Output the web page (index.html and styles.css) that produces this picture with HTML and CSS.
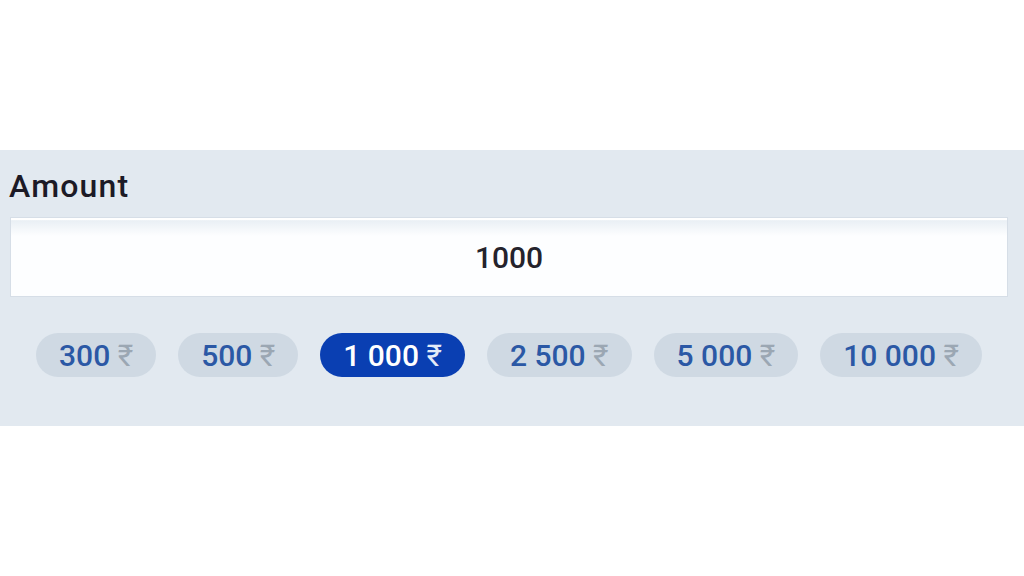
FILE: index.html
```html
<!DOCTYPE html>
<html>
  <head>
    <meta charset="utf-8">
    <title>Amount</title>
    <link rel="stylesheet" href="styles.css">
  </head>
  <body>
    <div class="panel">
      <label class="label" for="amount">Amount</label>
      <input class="amount-input" type="text" id="amount" value="1000">
      <div class="chips">
        <button class="chip" type="button">300 <span class="cur">₹</span></button>
        <button class="chip" type="button">500 <span class="cur">₹</span></button>
        <button class="chip active" type="button">1 000 <span class="cur">₹</span></button>
        <button class="chip" type="button">2 500 <span class="cur">₹</span></button>
        <button class="chip" type="button">5 000 <span class="cur">₹</span></button>
        <button class="chip" type="button">10 000 <span class="cur">₹</span></button>
      </div>
    </div>
  </body>
</html>
```

FILE: styles.css
```css
body {
  margin: 0;
  background: #fff;
  font-family: Roboto, Arial, sans-serif;
}

.panel {
  margin-top: 150px;
  height: 276px;
  box-sizing: border-box;
  background: #e2e9f0;
  padding: 18px 16px 0 10px;
}

.label {
  display: block;
  font-size: 32px;
  font-weight: 500;
  letter-spacing: 1.2px;
  line-height: 36px;
  color: #1c1a26;
  margin-left: -1px;
  margin-bottom: 13px;
}

.amount-input {
  display: block;
  box-sizing: border-box;
  width: 998px;
  height: 80px;
  border: 1px solid #d6dee7;
  box-shadow: inset 0 2px 0 #fff;
  background: linear-gradient(#fff 0, #eaf0f5 3px, #fdfeff 18px);
  font-family: Roboto, Arial, sans-serif;
  font-size: 30px;
  font-weight: 500;
  color: #25232c;
  text-align: center;
  outline: none;
}

.chips {
  display: flex;
  justify-content: center;
  gap: 22px;
  width: 998px;
  margin-top: 36px;
}

.chip {
  height: 44px;
  padding: 0 23px;
  border: none;
  border-radius: 22px;
  background: #cfd9e3;
  color: #2b58a5;
  font-family: Roboto, Arial, sans-serif;
  font-size: 30px;
  font-weight: 500;
  cursor: pointer;
}

.chip .cur {
  color: #9ba7b3;
  font-weight: 400;
}

.chip.active {
  background: #0a3fb2;
  color: #fff;
}

.chip.active .cur {
  color: #e4ebf7;
}
```
